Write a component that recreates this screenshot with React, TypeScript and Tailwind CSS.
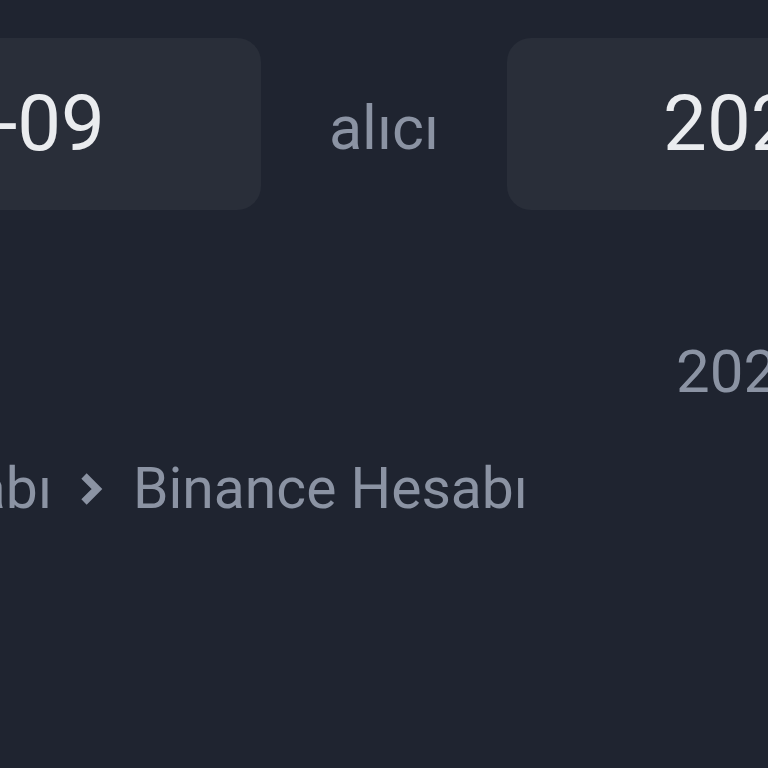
export default function App() {
  return (
    <div className="w-[768px] h-[768px] overflow-hidden bg-[#1f2430] font-['Roboto',sans-serif]">
      <div className="w-[2000px] ml-[-616px] pt-[38px] flex justify-center items-center gap-[68px]">
        <div className="h-[172px] px-[156px] rounded-[24px] bg-[#292e39] flex items-center justify-center">
          <span className="text-[78px] text-[#eaecef] leading-none whitespace-nowrap">2024-08-09</span>
        </div>
        <span className="pt-[8px] text-[61px] text-[#8b93a3] leading-none">alıcı</span>
        <div className="h-[172px] px-[156px] rounded-[24px] bg-[#292e39] flex items-center justify-center">
          <span className="text-[78px] text-[#eaecef] leading-none whitespace-nowrap">2024-09-09</span>
        </div>
      </div>

      <div className="mt-[132px] pl-[676px] whitespace-nowrap">
        <span className="text-[60px] text-[#8b93a3] leading-none">2024-09-09 12:00:00</span>
      </div>

      <div className="mt-[58px] flex items-center whitespace-nowrap text-[57px] text-[#8b93a3] leading-none">
        <div className="w-[52px] flex justify-end">
          <span>Fonlama Hesabı</span>
        </div>
        <svg className="ml-[27px]" width="26" height="34" viewBox="0 0 26 34" fill="none">
          <polyline points="5,4 18,17 5,30" stroke="#8b93a3" strokeWidth="7.5" />
        </svg>
        <span className="ml-[28px]">Binance Hesabı</span>
      </div>
    </div>
  );
}
